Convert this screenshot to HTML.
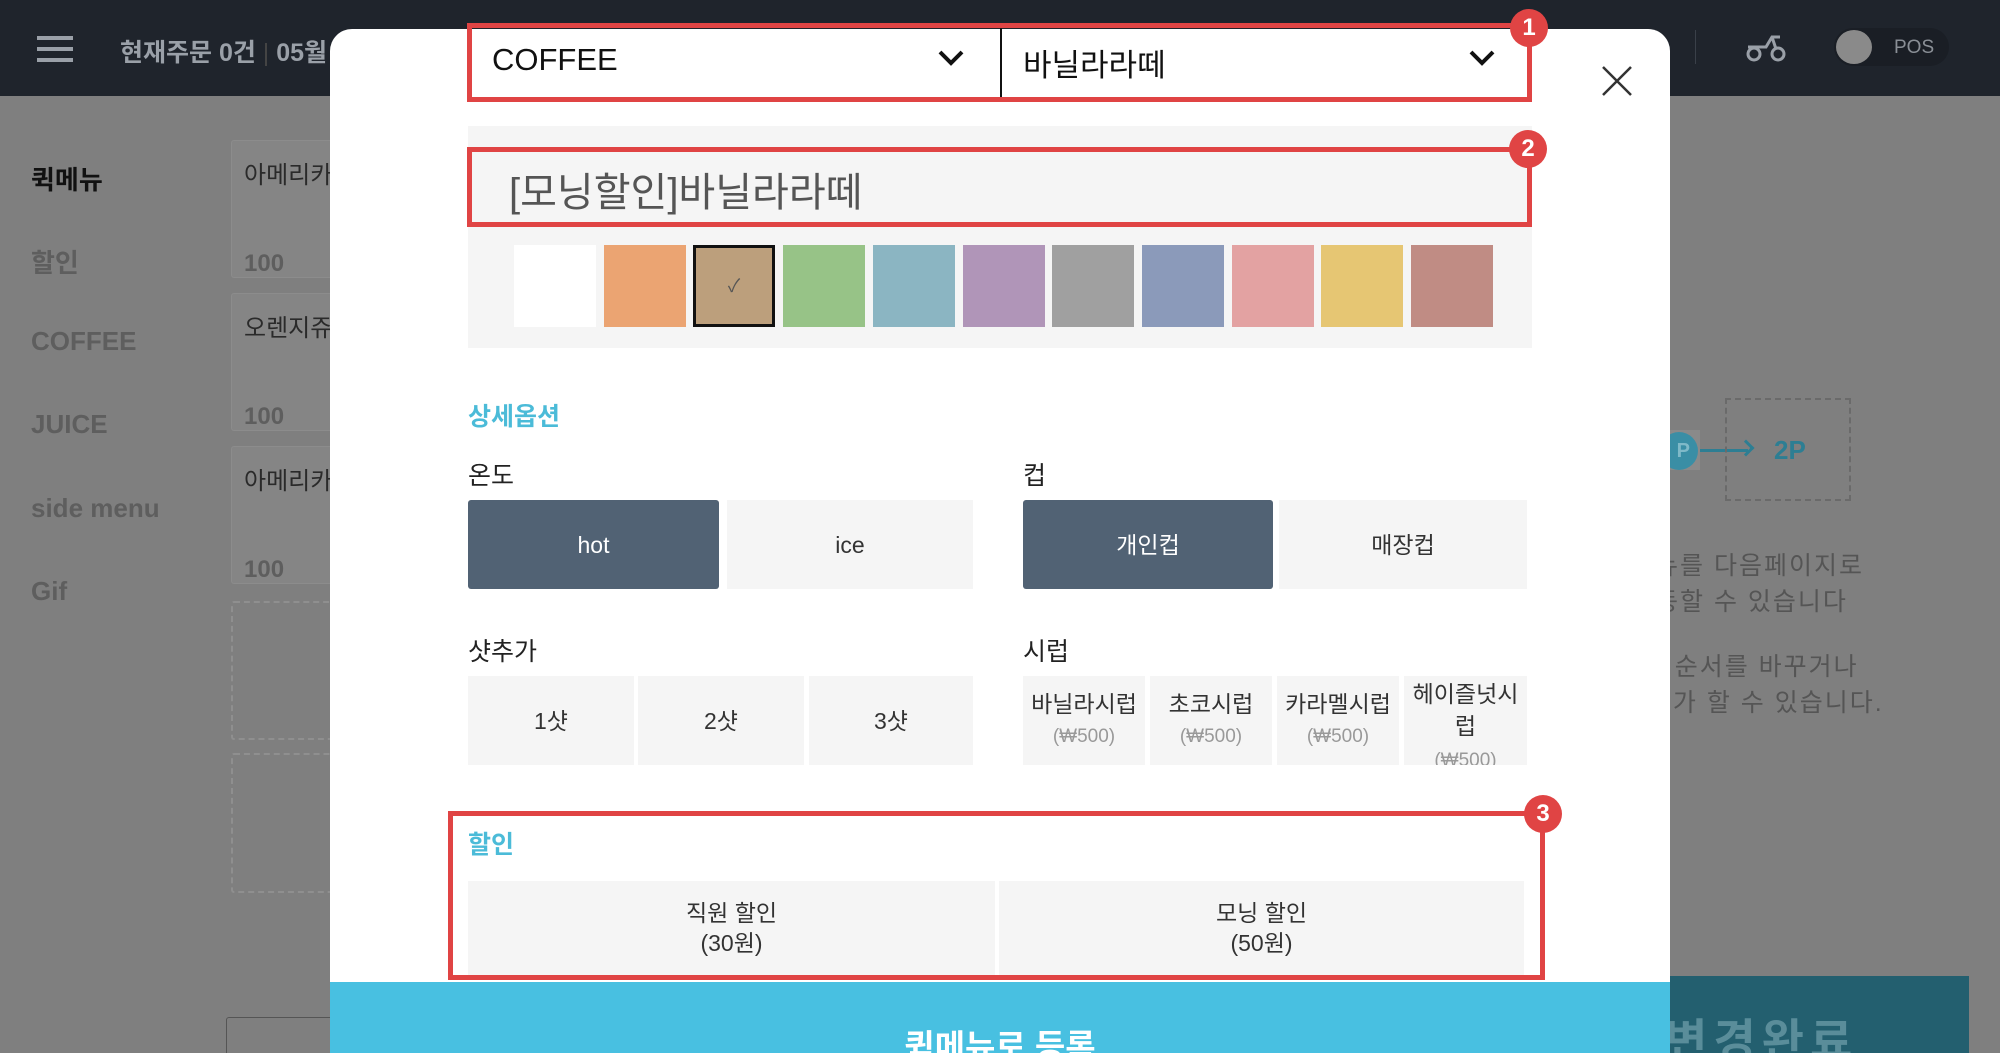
<!DOCTYPE html>
<html><head><meta charset="utf-8"><style>
*{margin:0;padding:0;box-sizing:border-box}
html,body{width:2000px;height:1053px;overflow:hidden}
body{background:#7f7f7f;font-family:"Liberation Sans","Noto Sans CJK KR",sans-serif;position:relative}
.a{position:absolute}
.hdr{left:0;top:0;width:2000px;height:96px;background:#1f242c}
.side{color:#5e5e5e;font-size:26px;font-weight:bold}
.card{background:#858585;border:1px solid #8c8c8c;border-radius:3px;color:#2a2a2a;font-size:24px;white-space:nowrap;overflow:hidden}
.dash{border:2px dashed #8f8f8f;border-radius:3px}
.modal{left:330px;top:29px;width:1340px;height:1024px;background:#fff;border-radius:22px 22px 0 0}
.red{border:5px solid #e04444}
.badge{width:38px;height:38px;border-radius:50%;background:#e04444;color:#fff;font-weight:bold;font-size:24px;text-align:center;line-height:38px}
.lbl{font-size:25px;color:#222}
.sec{font-size:25px;color:#4bbbd8;font-weight:bold}
.btn{background:#f5f5f5;display:flex;align-items:center;justify-content:center;text-align:center;font-size:23px;color:#333;line-height:30px}
.dk{background:#516274;color:#fff}
.sw{top:245px;width:82px;height:82px}
.sub{color:#999;font-size:19px}
</style></head><body>
<div class="a hdr"></div>
<div class="a" style="left:37px;top:36px;width:36px;height:4px;background:#9aa0a8;box-shadow:0 11px 0 #9aa0a8,0 22px 0 #9aa0a8"></div>
<div class="a" style="left:120px;top:33px;font-size:25px;color:#9aa0a8;font-weight:bold;white-space:nowrap">현재주문 0건 <span style="color:#444;font-weight:normal">|</span> 05월</div>
<div class="a" style="left:1695px;top:30px;width:1px;height:34px;background:#3a4049"></div>
<svg class="a" style="left:1745px;top:33px" width="42" height="30" viewBox="0 0 42 30"><g fill="none" stroke="#9aa0a8" stroke-width="3"><circle cx="9" cy="21" r="6"/><circle cx="33" cy="21" r="6"/><path d="M3 14h18l6-10h8M27 4l4 12"/></g></svg>
<div class="a" style="left:1834px;top:28px;width:115px;height:38px;border-radius:19px;background:#1a1e25"></div>
<div class="a" style="left:1836px;top:30px;width:36px;height:34px;border-radius:50%;background:#8a8a8a"></div>
<div class="a" style="left:1894px;top:37px;font-size:19px;color:#8a8f96">POS</div>

<div class="a side" style="left:31px;top:160px;color:#111">퀵메뉴</div>
<div class="a side" style="left:31px;top:243px">할인</div>
<div class="a side" style="left:31px;top:326px">COFFEE</div>
<div class="a side" style="left:31px;top:409px">JUICE</div>
<div class="a side" style="left:31px;top:493px">side menu</div>
<div class="a side" style="left:31px;top:576px">Gif</div>
<div class="a card" style="left:231px;top:140px;width:120px;height:138px;padding:14px 12px">아메리카노<div style="margin-top:60px;color:#5e5e5e;font-weight:bold">100</div></div>
<div class="a card" style="left:231px;top:293px;width:120px;height:138px;padding:14px 12px">오렌지쥬스<div style="margin-top:60px;color:#5e5e5e;font-weight:bold">100</div></div>
<div class="a card" style="left:231px;top:446px;width:120px;height:138px;padding:14px 12px">아메리카노<div style="margin-top:60px;color:#5e5e5e;font-weight:bold">100</div></div>
<div class="a dash" style="left:231px;top:601px;width:120px;height:139px"></div>
<div class="a dash" style="left:231px;top:753px;width:120px;height:140px"></div>
<div class="a" style="left:226px;top:1017px;width:120px;height:60px;border:1px solid #555;border-radius:3px"></div>

<div class="a" style="left:1650px;top:430px;width:50px;height:40px;background:#8a8a8a"></div>
<div class="a" style="left:1660px;top:432px;width:38px;height:38px;border-radius:50%;background:#3a8ea5;color:#7fb9c8;font-weight:bold;font-size:20px;line-height:38px;text-align:right;padding-right:8px">P</div>
<div class="a" style="left:1700px;top:449px;width:48px;height:3px;background:#2d7e93"></div>
<div class="a" style="left:1740px;top:442px;width:12px;height:12px;border-top:3px solid #2d7e93;border-right:3px solid #2d7e93;transform:rotate(45deg)"></div>
<div class="a" style="left:1725px;top:398px;width:126px;height:103px;border:2px dashed #6a6a6a"></div>
<div class="a" style="left:1774px;top:435px;font-size:26px;font-weight:bold;color:#2d7e93">2P</div>
<div class="a" style="left:1630px;top:548px;font-size:25px;color:#555;line-height:36px;letter-spacing:2px;white-space:nowrap">메뉴를 다음페이지로<br>이동할 수 있습니다</div>
<div class="a" style="left:1630px;top:649px;font-size:25px;color:#555;line-height:36px;letter-spacing:2px;white-space:nowrap">&nbsp;&nbsp;&nbsp;&nbsp; 순서를 바꾸거나<br>&nbsp;&nbsp;추가 할 수 있습니다.</div>
<div class="a" style="left:1600px;top:976px;width:369px;height:80px;background:#235f6f"></div>
<div class="a" style="left:1665px;top:1005px;font-size:46px;color:#5a8d9a;font-weight:bold;letter-spacing:6px;white-space:nowrap">변경완료</div>

<div class="a modal"></div>
<div class="a red" style="left:467px;top:23px;width:1065px;height:79px"></div>
<div class="a" style="left:1000px;top:28px;width:2px;height:69px;background:#111"></div>
<div class="a" style="left:492px;top:42px;font-size:31px;color:#111">COFFEE</div>
<div class="a" style="left:1023px;top:40px;font-size:31px;color:#111">바닐라라떼</div>
<svg class="a" style="left:937px;top:49px" width="28" height="18"><path d="M3 3l11 11 11-11" fill="none" stroke="#111" stroke-width="4"/></svg>
<svg class="a" style="left:1468px;top:49px" width="28" height="18"><path d="M3 3l11 11 11-11" fill="none" stroke="#111" stroke-width="4"/></svg>
<div class="a badge" style="left:1510px;top:9px">1</div>
<svg class="a" style="left:1601px;top:65px" width="32" height="32"><path d="M2 2l28 28M30 2L2 30" stroke="#333" stroke-width="2.5"/></svg>

<div class="a" style="left:468px;top:126px;width:1064px;height:222px;background:#f5f5f5"></div>
<div class="a red" style="left:467px;top:147px;width:1065px;height:80px"></div>
<div class="a" style="left:509px;top:160px;font-size:40px;color:#555">[모닝할인]바닐라라떼</div>
<div class="a badge" style="left:1509px;top:130px">2</div>
<div class="a sw" style="left:514px;background:#fff"></div>
<div class="a sw" style="left:604px;background:#eba472"></div>
<div class="a sw" style="left:693px;background:#bc9f7c;border:3px solid #111;color:#555;font-size:18px;text-align:center;line-height:76px">✓</div>
<div class="a sw" style="left:783px;background:#97c387"></div>
<div class="a sw" style="left:873px;background:#8bb5c2"></div>
<div class="a sw" style="left:963px;background:#b095b8"></div>
<div class="a sw" style="left:1052px;background:#a0a0a0"></div>
<div class="a sw" style="left:1142px;background:#8b9aba"></div>
<div class="a sw" style="left:1232px;background:#e3a2a2"></div>
<div class="a sw" style="left:1321px;background:#e6c673"></div>
<div class="a sw" style="left:1411px;background:#c08c84"></div>

<div class="a sec" style="left:468px;top:397px">상세옵션</div>
<div class="a lbl" style="left:468px;top:456px">온도</div>
<div class="a lbl" style="left:1023px;top:456px">컵</div>
<div class="a btn dk" style="left:468px;top:500px;width:251px;height:89px;border-radius:3px">hot</div>
<div class="a btn" style="left:727px;top:500px;width:246px;height:89px">ice</div>
<div class="a btn dk" style="left:1023px;top:500px;width:250px;height:89px;border-radius:3px">개인컵</div>
<div class="a btn" style="left:1279px;top:500px;width:248px;height:89px">매장컵</div>

<div class="a lbl" style="left:468px;top:632px">샷추가</div>
<div class="a lbl" style="left:1023px;top:632px">시럽</div>
<div class="a btn" style="left:468px;top:676px;width:166px;height:89px">1샷</div>
<div class="a btn" style="left:638px;top:676px;width:166px;height:89px">2샷</div>
<div class="a btn" style="left:809px;top:676px;width:164px;height:89px">3샷</div>
<div class="a btn" style="left:1023px;top:676px;width:122px;height:89px"><div>바닐라시럽<br><span class="sub">(₩500)</span></div></div>
<div class="a btn" style="left:1150px;top:676px;width:122px;height:89px"><div>초코시럽<br><span class="sub">(₩500)</span></div></div>
<div class="a btn" style="left:1277px;top:676px;width:122px;height:89px"><div>카라멜시럽<br><span class="sub">(₩500)</span></div></div>
<div class="a btn" style="left:1404px;top:676px;width:123px;height:89px;align-items:flex-start;overflow:hidden"><div style="margin-top:2px;line-height:32px">헤이즐넛시<br>럽<br><span class="sub" style="line-height:22px">(₩500)</span></div></div>

<div class="a red" style="left:448px;top:811px;width:1097px;height:169px"></div>
<div class="a badge" style="left:1524px;top:795px">3</div>
<div class="a sec" style="left:468px;top:825px">할인</div>
<div class="a btn" style="left:468px;top:881px;width:527px;height:94px"><div>직원 할인<br>(30원)</div></div>
<div class="a btn" style="left:999px;top:881px;width:525px;height:94px"><div>모닝 할인<br>(50원)</div></div>

<div class="a" style="left:330px;top:982px;width:1340px;height:71px;background:#48c0e1"></div>
<div class="a" style="left:330px;top:1020px;width:1340px;text-align:center;color:#fff;font-size:33px;font-weight:bold">퀵메뉴로 등록</div>
</body></html>
